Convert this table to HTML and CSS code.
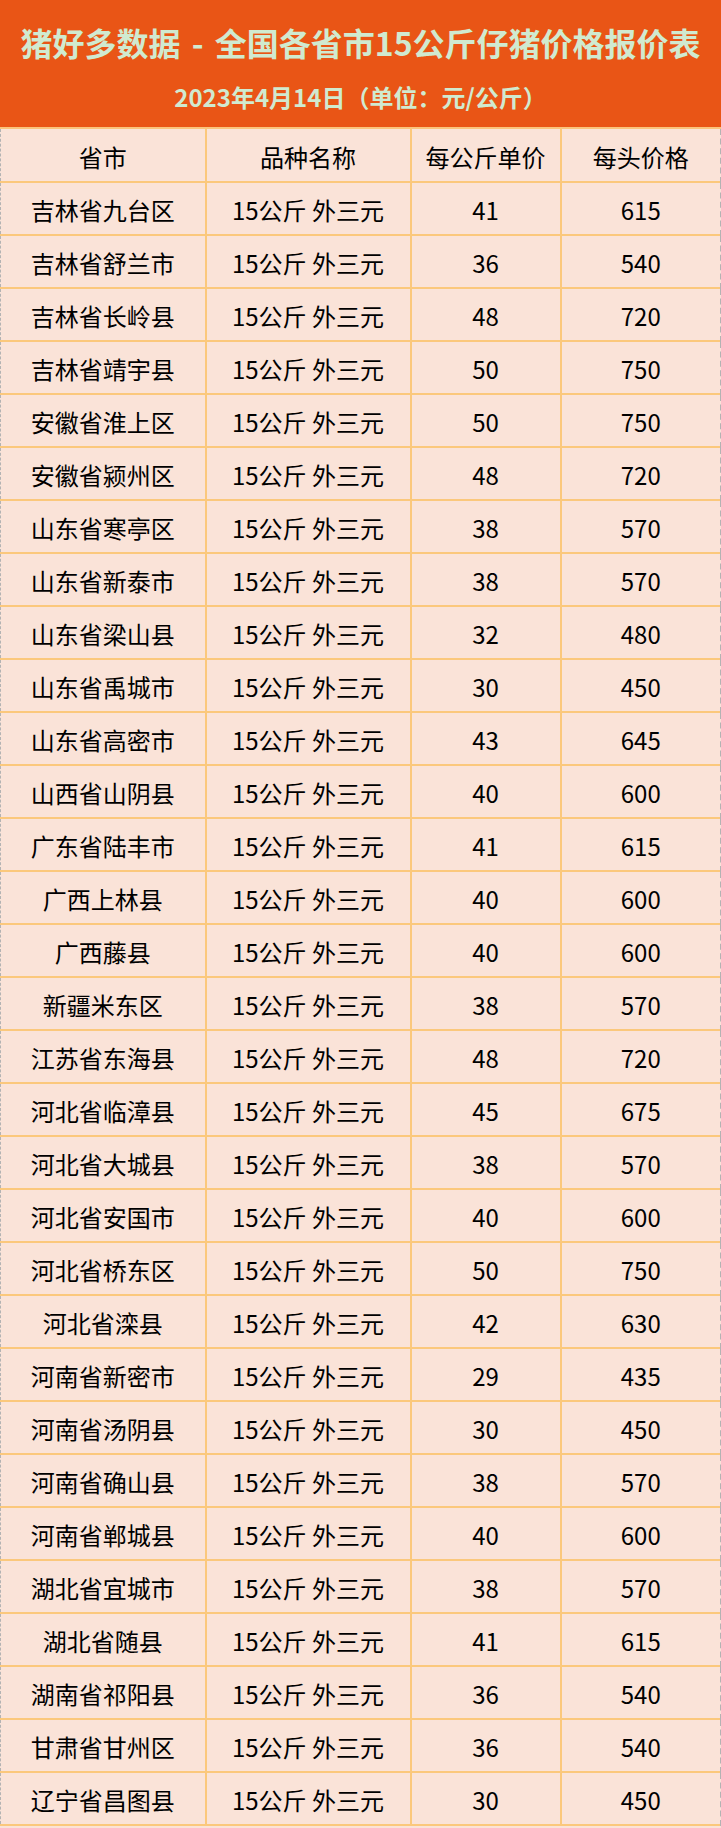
FILE: index.html
```html
<!DOCTYPE html>
<html lang="zh-CN">
<head>
<meta charset="utf-8">
<title>猪好多数据 - 全国各省市15公斤仔猪价格报价表</title>
<link rel="stylesheet" href="styles.css">
</head>
<body>
<div class="sheet">
  <header class="banner">
    <h1 class="title">猪好多数据 - 全国各省市15公斤仔猪价格报价表</h1>
    <p class="subtitle">2023年4月14日（单位：元/公斤）</p>
  </header>
  <table class="prices">
    <colgroup>
      <col class="c1"><col class="c2"><col class="c3"><col class="c4">
    </colgroup>
    <thead>
      <tr><th>省市</th><th>品种名称</th><th>每公斤单价</th><th>每头价格</th></tr>
    </thead>
    <tbody>
      <tr><td>吉林省九台区</td><td>15公斤 外三元</td><td>41</td><td>615</td></tr>
      <tr><td>吉林省舒兰市</td><td>15公斤 外三元</td><td>36</td><td>540</td></tr>
      <tr><td>吉林省长岭县</td><td>15公斤 外三元</td><td>48</td><td>720</td></tr>
      <tr><td>吉林省靖宇县</td><td>15公斤 外三元</td><td>50</td><td>750</td></tr>
      <tr><td>安徽省淮上区</td><td>15公斤 外三元</td><td>50</td><td>750</td></tr>
      <tr><td>安徽省颍州区</td><td>15公斤 外三元</td><td>48</td><td>720</td></tr>
      <tr><td>山东省寒亭区</td><td>15公斤 外三元</td><td>38</td><td>570</td></tr>
      <tr><td>山东省新泰市</td><td>15公斤 外三元</td><td>38</td><td>570</td></tr>
      <tr><td>山东省梁山县</td><td>15公斤 外三元</td><td>32</td><td>480</td></tr>
      <tr><td>山东省禹城市</td><td>15公斤 外三元</td><td>30</td><td>450</td></tr>
      <tr><td>山东省高密市</td><td>15公斤 外三元</td><td>43</td><td>645</td></tr>
      <tr><td>山西省山阴县</td><td>15公斤 外三元</td><td>40</td><td>600</td></tr>
      <tr><td>广东省陆丰市</td><td>15公斤 外三元</td><td>41</td><td>615</td></tr>
      <tr><td>广西上林县</td><td>15公斤 外三元</td><td>40</td><td>600</td></tr>
      <tr><td>广西藤县</td><td>15公斤 外三元</td><td>40</td><td>600</td></tr>
      <tr><td>新疆米东区</td><td>15公斤 外三元</td><td>38</td><td>570</td></tr>
      <tr><td>江苏省东海县</td><td>15公斤 外三元</td><td>48</td><td>720</td></tr>
      <tr><td>河北省临漳县</td><td>15公斤 外三元</td><td>45</td><td>675</td></tr>
      <tr><td>河北省大城县</td><td>15公斤 外三元</td><td>38</td><td>570</td></tr>
      <tr><td>河北省安国市</td><td>15公斤 外三元</td><td>40</td><td>600</td></tr>
      <tr><td>河北省桥东区</td><td>15公斤 外三元</td><td>50</td><td>750</td></tr>
      <tr><td>河北省滦县</td><td>15公斤 外三元</td><td>42</td><td>630</td></tr>
      <tr><td>河南省新密市</td><td>15公斤 外三元</td><td>29</td><td>435</td></tr>
      <tr><td>河南省汤阴县</td><td>15公斤 外三元</td><td>30</td><td>450</td></tr>
      <tr><td>河南省确山县</td><td>15公斤 外三元</td><td>38</td><td>570</td></tr>
      <tr><td>河南省郸城县</td><td>15公斤 外三元</td><td>40</td><td>600</td></tr>
      <tr><td>湖北省宜城市</td><td>15公斤 外三元</td><td>38</td><td>570</td></tr>
      <tr><td>湖北省随县</td><td>15公斤 外三元</td><td>41</td><td>615</td></tr>
      <tr><td>湖南省祁阳县</td><td>15公斤 外三元</td><td>36</td><td>540</td></tr>
      <tr><td>甘肃省甘州区</td><td>15公斤 外三元</td><td>36</td><td>540</td></tr>
      <tr><td>辽宁省昌图县</td><td>15公斤 外三元</td><td>30</td><td>450</td></tr>
    </tbody>
  </table>
</div>
</body>
</html>
```

FILE: styles.css
```css
html, body {
  margin: 0;
  padding: 0;
  background: #fae3d8;
}

.sheet {
  width: 721px;
  font-family: "Noto Sans CJK SC", "Noto Sans", sans-serif;
}

.banner {
  height: 129px;
  background: #e95516;
  border-bottom: 2px solid #fbc47c;
  box-sizing: border-box;
  display: flex;
  flex-direction: column;
  align-items: center;
  color: #d0ead0;
  font-weight: 700;
}

.title {
  margin: 21px 0 0;
  font-size: 32px;
  line-height: 42px;
  font-weight: 700;
  word-spacing: 4px;
  white-space: nowrap;
}

.subtitle {
  margin: 19px 0 0;
  font-size: 24px;
  line-height: 30px;
  white-space: nowrap;
}

.prices {
  width: 721px;
  border-collapse: collapse;
  table-layout: fixed;
  background: #fae3d8;
  color: #000;
}

.c1 { width: 205px; }
.c2 { width: 205px; }
.c3 { width: 150px; }
.c4 { width: 161px; }

.prices th,
.prices td {
  height: 53px;
  padding: 3px 0 0;
  border-top: 2px solid #fbc87c;
  border-bottom: 2px solid #fbc87c;
  border-left: 2px solid #fbc87c;
  text-align: center;
  font-size: 24px;
  font-weight: 400;
  line-height: 30px;
  box-sizing: border-box;
}

.prices th:first-child,
.prices td:first-child {
  border-left: 1px dashed #b3b3b3;
}

.prices th:last-child,
.prices td:last-child {
  border-right: 3px dashed #b3b3b3;
}

.prices thead th {
  border-top: none;
}
```
